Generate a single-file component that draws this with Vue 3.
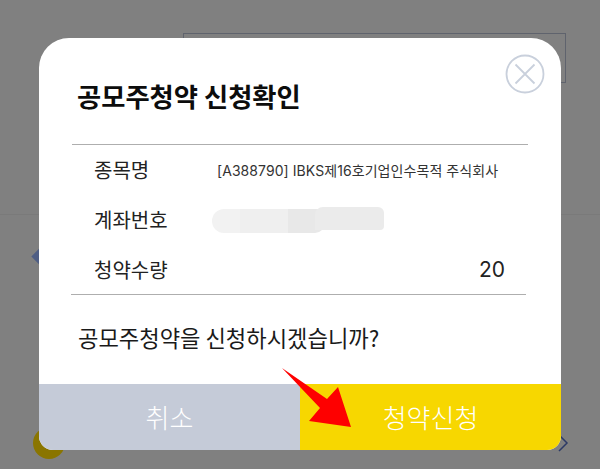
<script setup>
const rows = [
  { label: '종목명', value: '[A388790] IBKS제16호기업인수목적 주식회사', kind: 'name' },
  { label: '계좌번호', value: '', kind: 'masked' },
  { label: '청약수량', value: '20', kind: 'qty' },
]
</script>

<template>
  <div class="page">
    <div class="bg-box"></div>
    <div class="bg-line"></div>
    <div class="bg-diamond"></div>
    <div class="bg-coin"></div>
    <svg class="bg-chevron" width="12" height="20" viewBox="0 0 12 20">
      <path d="M2 2l8 8-8 8" fill="none" stroke="#2c3a66" stroke-width="1.5" />
    </svg>

    <section class="modal">
      <header class="head">
        <h1 class="title">공모주청약 신청확인</h1>
        <button class="close" aria-label="닫기">
          <svg width="40" height="40" viewBox="0 0 40 40">
            <circle cx="20" cy="20" r="18.5" fill="#fff" stroke="#c9d0dc" stroke-width="1.8" />
            <path d="M10.5 10.5l19 19M29.5 10.5l-19 19" stroke="#c9d0dc" stroke-width="1.8" fill="none" />
          </svg>
        </button>
      </header>

      <div class="table">
        <div v-for="r in rows" :key="r.label" class="row">
          <span class="label">{{ r.label }}</span>
          <span v-if="r.kind === 'name'" class="name">{{ r.value }}</span>
          <span v-else-if="r.kind === 'masked'" class="masked">
            <i class="m1"></i><i class="m2"></i><i class="m3"></i><i class="m4"></i>
          </span>
          <span v-else class="qty">{{ r.value }}</span>
        </div>
      </div>
      <div class="table-end"></div>

      <p class="question">공모주청약을 신청하시겠습니까?</p>

      <footer class="actions">
        <button class="btn cancel">취소</button>
        <button class="btn apply">청약신청</button>
      </footer>
    </section>

    <svg class="arrow" width="600" height="469" viewBox="0 0 600 469">
      <polygon points="282,368 327,399 338,387 351,427 309,421 320,408" fill="#fe0000" />
    </svg>
  </div>
</template>

<style scoped>
.page {
  position: relative;
  width: 600px;
  height: 469px;
  padding-top: 38px;
  box-sizing: border-box;
  overflow: hidden;
  background: #808080;
  font-family: "Noto Sans CJK KR", "Noto Sans", sans-serif;
  color: #111;
}
.bg-box {
  position: absolute;
  left: 183px;
  top: 33px;
  width: 381px;
  height: 48px;
  border: 1px solid #5f636d;
}
.bg-line {
  position: absolute;
  left: 0;
  top: 214px;
  width: 600px;
  height: 1px;
  background: #7a7a7a;
}
.bg-diamond {
  position: absolute;
  left: 34px;
  top: 250px;
  width: 13px;
  height: 13px;
  background: #4f5e84;
  transform: rotate(45deg);
}
.bg-coin {
  position: absolute;
  left: 33px;
  top: 427px;
  width: 32px;
  height: 32px;
  border-radius: 50%;
  background: #8a7500;
}
.bg-chevron {
  position: absolute;
  left: 557px;
  top: 433px;
}
.modal {
  position: relative;
  width: 522px;
  height: 412px;
  margin-left: 39px;
  display: flex;
  flex-direction: column;
  background: #fff;
  border-radius: 30px 30px 14px 14px;
  overflow: hidden;
}
.head {
  position: relative;
  height: 106px;
  padding: 40px 0 0 38px;
  box-sizing: border-box;
  flex: none;
}
.title {
  margin: 0;
  font-size: 26.3px;
  line-height: 36px;
  font-weight: 700;
  color: #0c0c0c;
}
.close {
  position: absolute;
  right: 16px;
  top: 16px;
  padding: 0;
  border: 0;
  background: none;
  display: block;
  line-height: 0;
}
.table {
  flex: none;
  margin: 0 33px;
  height: 150px;
  box-sizing: border-box;
  border-top: 1px solid #aeaeae;
  display: flex;
  flex-direction: column;
}
.table-end {
  flex: none;
  height: 1px;
  margin: 0 35px 0 32px;
  background: #aeaeae;
}
.row {
  flex: 1;
  display: flex;
  align-items: center;
  padding: 0 23px 0 22px;
}
.label {
  width: 123px;
  flex: none;
  font-size: 20px;
  color: #222;
}
.name {
  font-family: Inter, "Noto Sans CJK KR", sans-serif;
  font-size: 14px;
  letter-spacing: 0.07px;
  white-space: nowrap;
  color: #333;
}
.masked {
  position: relative;
  display: block;
  width: 173px;
  height: 26px;
  margin-left: -5px;
}
.masked i {
  position: absolute;
  display: block;
}
.m1 { left: 0; top: 2px; width: 28px; height: 24px; background: #f2f2f2; border-radius: 12px 0 0 12px; }
.m2 { left: 28px; top: 2px; width: 48px; height: 24px; background: #efefef; }
.m3 { left: 76px; top: 2px; width: 37px; height: 24px; background: #e8e8e8; border-radius: 0 0 10px 0; }
.m4 { left: 103px; top: 0; width: 69px; height: 23px; background: #ebebeb; border-radius: 8px 6px 4px 0; }
.qty {
  margin-left: auto;
  font-family: Inter, "Noto Sans CJK KR", sans-serif;
  font-size: 21px;
  color: #222;
}
.question {
  margin: 0;
  flex: none;
  height: 89px;
  padding: 24px 0 0 39px;
  box-sizing: border-box;
  font-size: 22.2px;
  line-height: 36px;
  color: #1a1a1a;
}
.actions {
  flex: 1;
  display: flex;
}
.btn {
  flex: 1;
  border: 0;
  padding: 0 0 2px;
  font-family: inherit;
  font-size: 26px;
  font-weight: 300;
  color: #fff;
}
.cancel { background: #c5cbd8; }
.apply { background: #f7d700; }
.arrow {
  position: absolute;
  left: 0;
  top: 0;
  pointer-events: none;
}
</style>
